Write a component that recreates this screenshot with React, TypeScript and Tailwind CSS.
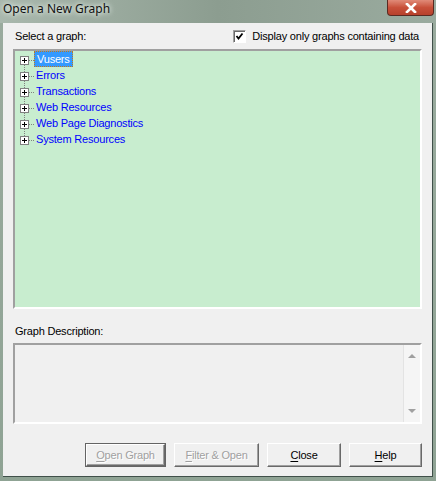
const items = [
  "Vusers",
  "Errors",
  "Transactions",
  "Web Resources",
  "Web Page Diagnostics",
  "System Resources",
];

function TreeGlyph({ first, last }: { first: boolean; last: boolean }) {
  return (
    <svg width="19" height="16" viewBox="0 0 19 16" className="shrink-0">
      <line
        x1="9.5"
        y1={first ? 14 : 0}
        x2="9.5"
        y2={last ? 5 : 16}
        stroke="#808080"
        strokeDasharray="1 1"
      />
      <line x1="14" y1="9.5" x2="19" y2="9.5" stroke="#808080" strokeDasharray="1 1" />
      <rect x="5.5" y="5.5" width="8" height="8" fill="#ffffff" stroke="#808080" />
      <line x1="7" y1="9.5" x2="12" y2="9.5" stroke="#000" />
      <line x1="9.5" y1="7" x2="9.5" y2="12" stroke="#000" />
    </svg>
  );
}

function Btn({
  label,
  accel,
  disabled,
  isDefault,
  width,
}: {
  label: string;
  accel: number;
  disabled?: boolean;
  isDefault?: boolean;
  width: string;
}) {
  const text = (
    <>
      {label.slice(0, accel)}
      <span className="underline underline-offset-2">{label[accel]}</span>
      {label.slice(accel + 1)}
    </>
  );
  return (
    <div
      className={`${width} h-[24px] ${isDefault ? "border border-[#646464]" : ""} bg-[#f0f0f0]`}
    >
      <div className="h-full w-full border border-t-white border-l-white border-r-[#696969] border-b-[#696969] shadow-[inset_-1px_-1px_0_#a0a0a0] flex items-center justify-center">
        <span
          className={
            disabled
              ? "text-[#a0a0a0] [text-shadow:1px_1px_0_#ffffff]"
              : "text-black"
          }
        >
          {text}
        </span>
      </div>
    </div>
  );
}

export default function App() {
  return (
    <div className="w-[436px] h-[481px] flex flex-col bg-gradient-to-b from-[#9aab9e] to-[#8fa394] font-['Liberation_Sans',Arial,sans-serif] text-[11px] tracking-[-0.2px] text-black">
      {/* title bar */}
      <div className="h-[23px] flex items-start bg-gradient-to-r from-[#a9b8ad] via-[#8c9d90] to-[#9aab9f]">
        <div className="pl-[3px] pt-[3px] text-[12px] tracking-normal text-[#111] font-['Noto_Sans',sans-serif] leading-none [text-shadow:0_0_6px_#e8f0ea,0_0_4px_#e8f0ea]">
          Open a New Graph
        </div>
        <div className="ml-auto mr-[2px] w-[47px] h-[16px] rounded-b-[4px] border border-t-0 border-[#5a2a22] bg-gradient-to-b from-[#e08a78] via-[#c8503a] to-[#b7412c] flex items-center justify-center">
          <svg width="12" height="10" viewBox="0 0 12 10">
            <path
              d="M2 1 L10 9 M10 1 L2 9"
              stroke="#ffffff"
              strokeWidth="2.6"
              strokeLinecap="square"
            />
          </svg>
        </div>
      </div>

      {/* client */}
      <div className="ml-[3px] w-[430px] h-[454px] border-r border-b border-[#40504a] bg-[#f0f0f0] flex flex-col px-[10px] pt-[6px]">
        <div className="h-[14px] flex items-center justify-between">
          <span className="pl-[2px]">Select a graph:</span>
          <div className="flex items-center gap-[6px] pr-[3px]">
            <div className="w-[13px] h-[13px] border border-t-[#a0a0a0] border-l-[#a0a0a0] border-r-white border-b-white bg-white shadow-[inset_1px_1px_0_#696969] flex items-center justify-center">
              <svg width="9" height="9" viewBox="0 0 9 9">
                <path d="M1.5 4 L3.5 6.5 L7.5 1.5" stroke="#000" strokeWidth="1.8" fill="none" />
              </svg>
            </div>
            <span>Display only graphs containing data</span>
          </div>
        </div>

        <div className="mt-[6px] w-[409px] h-[260px] border-2 border-t-[#a0a0a0] border-l-[#a0a0a0] border-r-white border-b-white bg-[#c8edcf]">
          {items.map((it, i) => (
            <div key={it} className="h-[16px] flex items-center">
              <TreeGlyph first={i === 0} last={i === items.length - 1} />
              <span
                className={
                  i === 0
                    ? "h-[16px] px-[2px] leading-[14px] bg-[#3399ff] text-white border border-dotted border-[#c27a1a]"
                    : "h-[16px] px-[2px] leading-[16px] text-[#0000ff]"
                }
              >
                {it}
              </span>
            </div>
          ))}
        </div>

        <div className="mt-[16px] h-[12px] pl-[2px] leading-[12px]">Graph Description:</div>

        <div className="mt-[6px] w-[409px] h-[81px] border-2 border-t-[#a0a0a0] border-l-[#a0a0a0] border-r-white border-b-white flex">
          <div className="flex-1" />
          <div className="w-[17px] h-full bg-[#f5f5f5] border-l border-[#e3e3e3] flex flex-col justify-between items-center py-[8px]">
            <svg width="8" height="5" viewBox="0 0 8 5">
              <path d="M0 5 L4 1 L8 5 Z" fill="#a0a0a0" />
            </svg>
            <svg width="8" height="5" viewBox="0 0 8 5">
              <path d="M0 0 L4 4 L8 0 Z" fill="#a0a0a0" />
            </svg>
          </div>
        </div>

        <div className="mt-[19px] flex justify-end gap-[8px]">
          <Btn label="Open Graph" accel={0} disabled isDefault width="w-[81px]" />
          <Btn label="Filter & Open" accel={0} disabled width="w-[85px]" />
          <Btn label="Close" accel={0} width="w-[74px]" />
          <Btn label="Help" accel={0} width="w-[73px]" />
        </div>
      </div>
    </div>
  );
}
